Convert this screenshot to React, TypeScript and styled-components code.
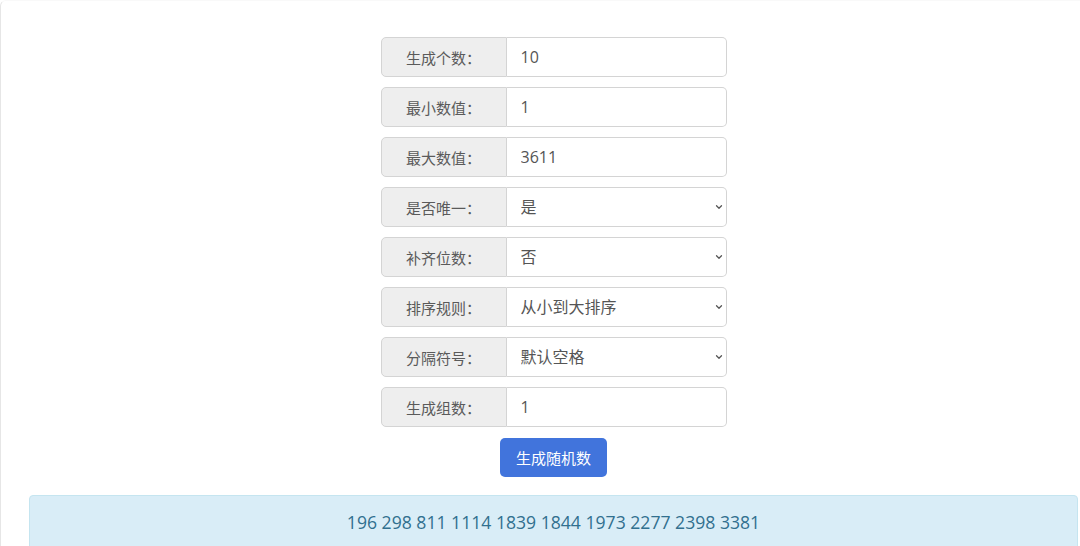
import React from "react";
import styled, { createGlobalStyle } from "styled-components";
import { ChevronDown } from "lucide-react";

const Global = createGlobalStyle`
  html, body { margin: 0; padding: 0; background: #fff; }
  body { font-family: "Open Sans", "Noto Sans CJK SC", sans-serif; color: #555; overflow: hidden; }
`;

const Card = styled.div`
  width: 1100px;
  min-height: 560px;
  box-sizing: border-box;
  border-left: 1px solid #e6e6e6;
  border-top: 1px solid #f9f9f9;
  border-radius: 6px 0 0 0;
  padding: 36px 0 0 28px;
`;

const Content = styled.div`
  width: 1049px;
  display: flex;
  flex-direction: column;
  align-items: center;
`;

const Form = styled.div`
  display: flex;
  flex-direction: column;
  gap: 10px;
  width: 346px;
`;

const Row = styled.div`
  display: flex;
  height: 40px;
`;

const Label = styled.div`
  flex: 0 0 126px;
  box-sizing: border-box;
  display: flex;
  align-items: center;
  justify-content: center;
  background: #eeeeee;
  border: 1px solid #d4d4d4;
  border-radius: 5px 0 0 5px;
  font-family: "Noto Sans CJK SC", sans-serif;
  font-size: 15px;
  color: #5a5a5a;
`;

const Field = styled.div`
  position: relative;
  flex: 1 1 0;
  min-width: 0;
  display: flex;
`;

const Input = styled.input`
  flex: 1 1 0;
  width: 0;
  min-width: 0;
  box-sizing: border-box;
  border: 1px solid #d4d4d4;
  border-left: none;
  border-radius: 0 5px 5px 0;
  padding: 0 14px;
  font-family: "Open Sans", "Noto Sans CJK SC", sans-serif;
  font-size: 16px;
  color: #555;
  outline: none;
  background: #fff;
`;

const Select = styled.select`
  flex: 1 1 0;
  width: 0;
  min-width: 0;
  box-sizing: border-box;
  appearance: none;
  -webkit-appearance: none;
  border: 1px solid #d4d4d4;
  border-left: none;
  border-radius: 0 5px 5px 0;
  padding: 0 14px;
  font-family: "Open Sans", "Noto Sans CJK SC", sans-serif;
  font-size: 16px;
  color: #555;
  outline: none;
  background: #fff;
`;

const Chevron = styled.span`
  position: absolute;
  right: 3px;
  top: 50%;
  transform: translateY(-50%);
  display: flex;
  color: #555;
  pointer-events: none;
`;

const Button = styled.button`
  margin-top: 11px;
  width: 107px;
  height: 39px;
  border: none;
  border-radius: 5px;
  background: #4174dc;
  color: #fff;
  font-family: "Noto Sans CJK SC", sans-serif;
  font-size: 15px;
  cursor: pointer;
`;

const Alert = styled.div`
  align-self: stretch;
  margin-top: 18px;
  box-sizing: border-box;
  height: 60px;
  background: #d9edf7;
  border: 1px solid #c5e5f0;
  border-radius: 4px;
  padding-top: 14px;
  text-align: center;
  color: #31708f;
  font-family: "Open Sans", sans-serif;
  font-size: 17.6px;
  line-height: 24px;
`;

const inputs: { label: string; value: string; options?: string[] }[] = [
  { label: "生成个数：", value: "10" },
  { label: "最小数值：", value: "1" },
  { label: "最大数值：", value: "3611" },
  { label: "是否唯一：", value: "是", options: ["是", "否"] },
  { label: "补齐位数：", value: "否", options: ["否", "是"] },
  { label: "排序规则：", value: "从小到大排序", options: ["从小到大排序", "从大到小排序", "不排序"] },
  { label: "分隔符号：", value: "默认空格", options: ["默认空格", "逗号", "换行"] },
  { label: "生成组数：", value: "1" },
];

export default function App() {
  return (
    <>
      <Global />
      <Card>
        <Content>
          <Form>
            {inputs.map((r) => (
              <Row key={r.label}>
                <Label>{r.label}</Label>
                <Field>
                  {r.options ? (
                    <>
                      <Select defaultValue={r.value}>
                        {r.options.map((o) => (
                          <option key={o} value={o}>{o}</option>
                        ))}
                      </Select>
                      <Chevron>
                        <ChevronDown size={10} strokeWidth={3} />
                      </Chevron>
                    </>
                  ) : (
                    <Input defaultValue={r.value} />
                  )}
                </Field>
              </Row>
            ))}
          </Form>
          <Button>生成随机数</Button>
          <Alert>196 298 811 1114 1839 1844 1973 2277 2398 3381</Alert>
        </Content>
      </Card>
    </>
  );
}
